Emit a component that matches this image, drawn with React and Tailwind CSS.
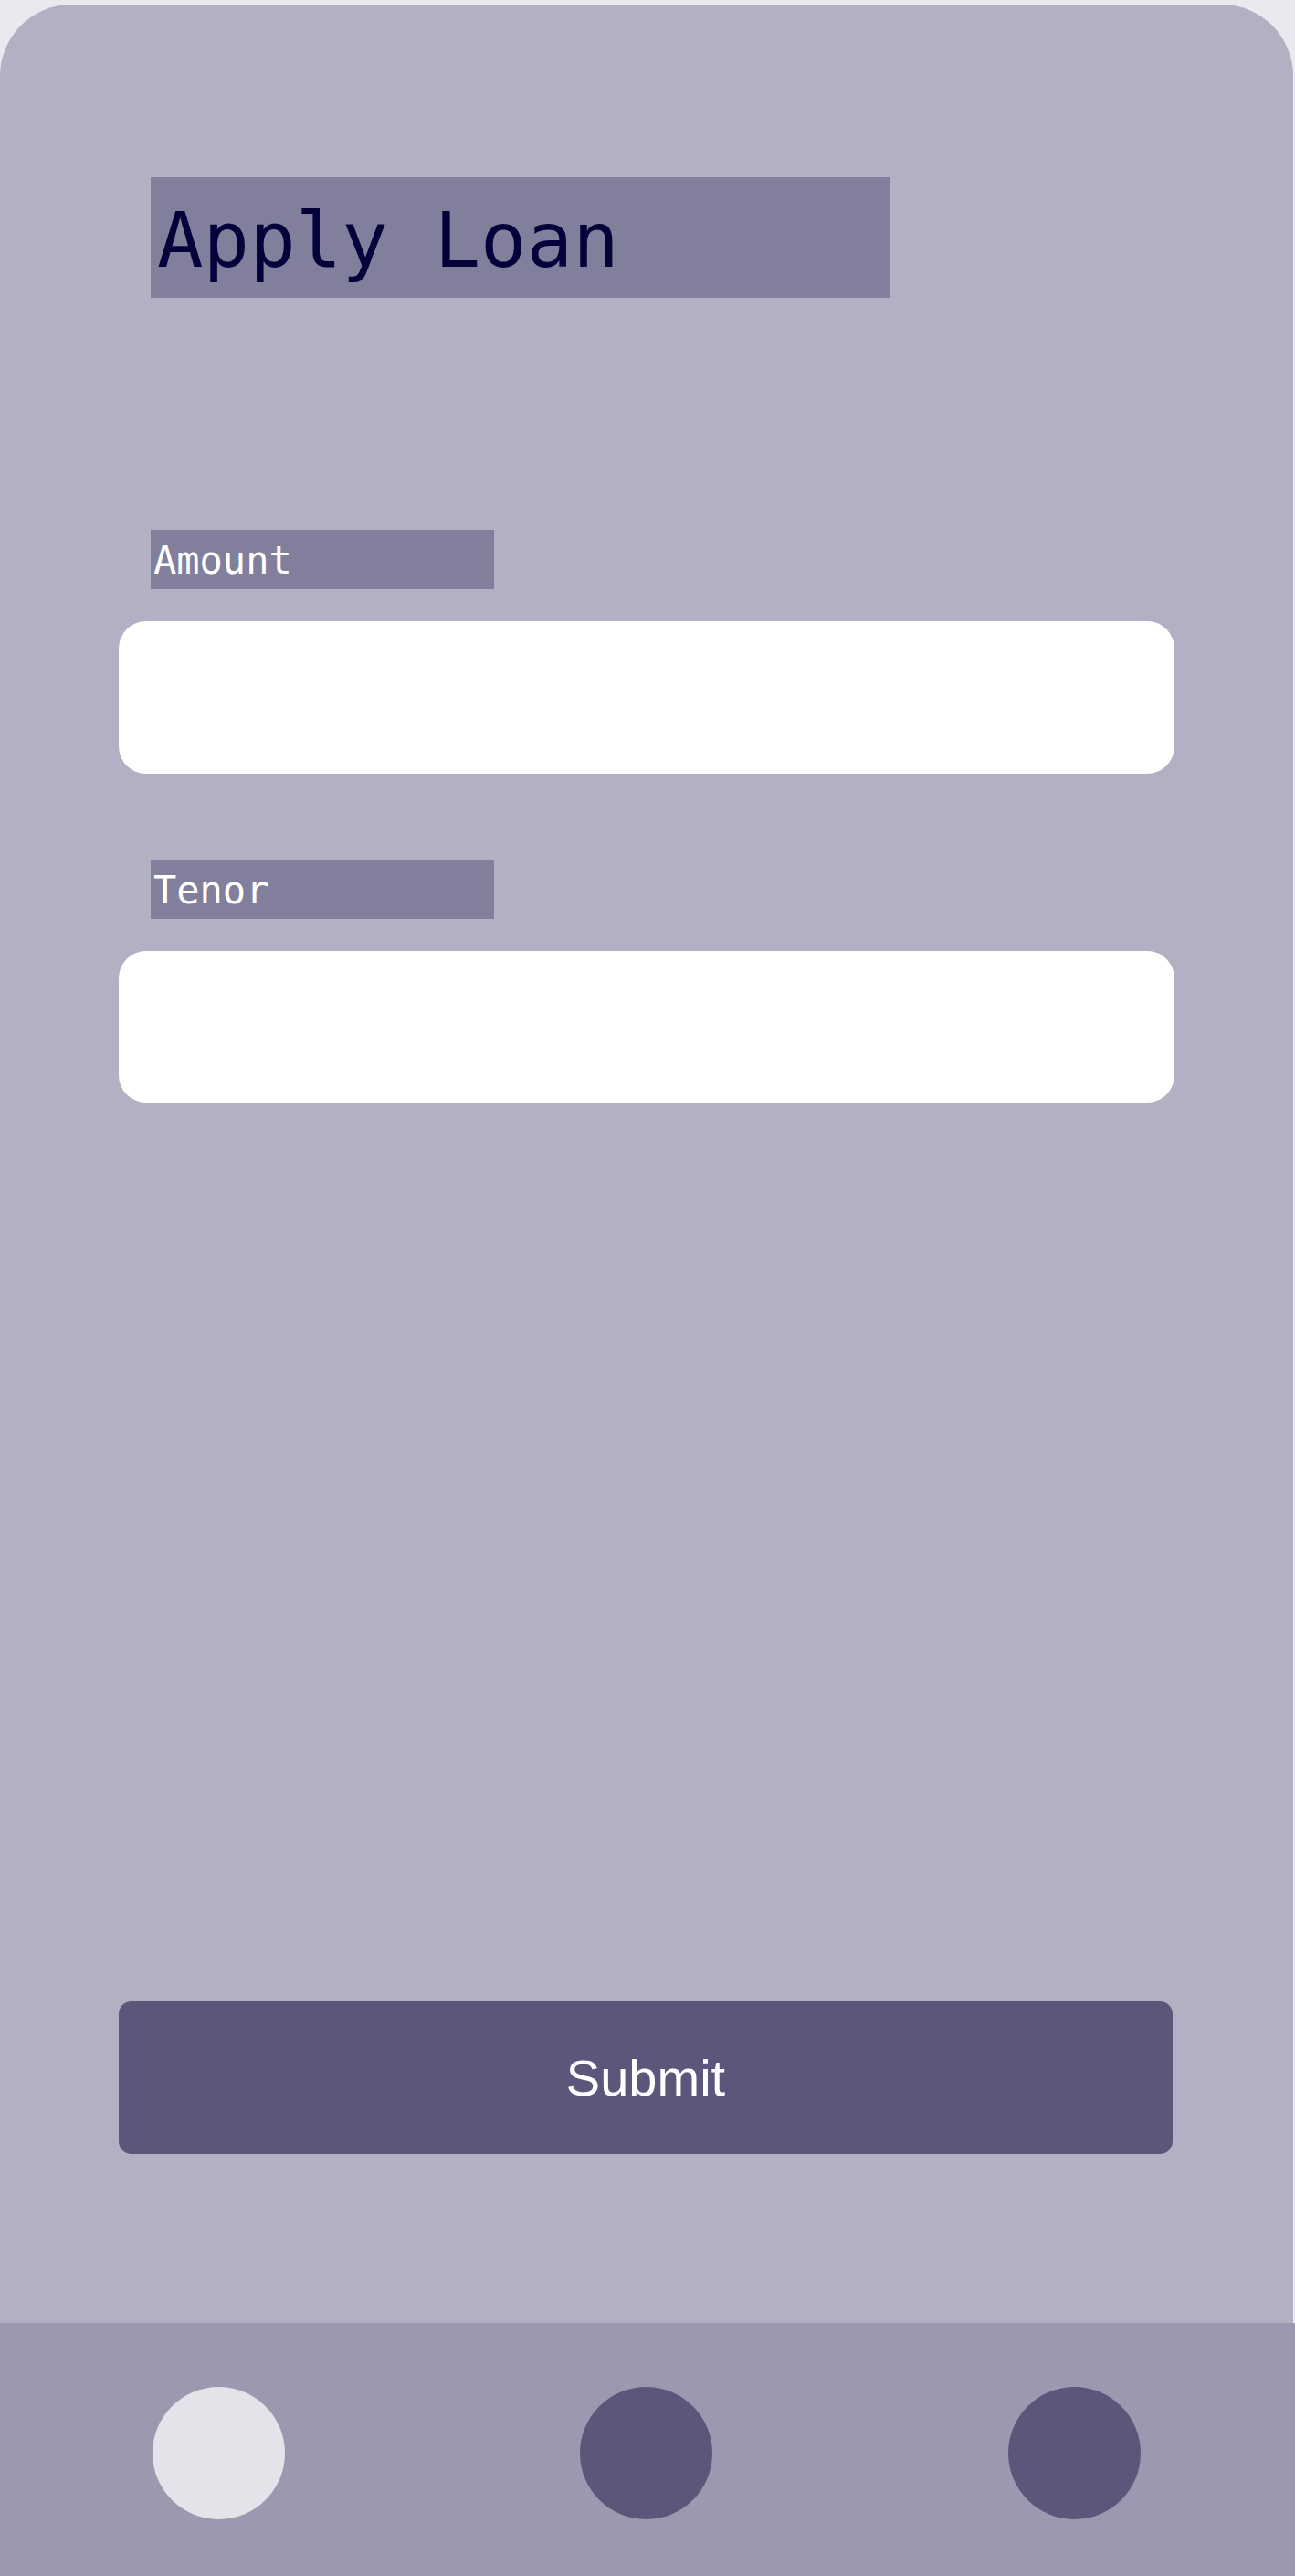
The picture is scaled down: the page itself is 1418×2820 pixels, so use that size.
export default function App() {
  return (
    <div className="min-h-[2820px] bg-[#e9e9ef] pt-[5px] flex flex-col">
      <div className="mr-[2px] h-[2538px] rounded-t-[78px] bg-[#b2b1c3] flex flex-col">
        <div className="ml-[165px] mt-[189px] w-[810px] h-[132px] bg-[#817f9b] flex items-center pl-[7px] pt-[6px]">
          <h1 className="font-['DejaVu_Sans_Mono',monospace] text-[84px] leading-none text-[#03003a]">
            Apply Loan
          </h1>
        </div>

        <div className="ml-[165px] mt-[254px] w-[376px] h-[65px] bg-[#817f9b] flex items-center pl-[3px] pt-[3px]">
          <span className="font-['DejaVu_Sans_Mono',monospace] text-[42px] leading-none text-white">
            Amount
          </span>
        </div>
        <input
          type="text"
          className="ml-[130px] mt-[35px] w-[1156px] h-[167px] rounded-[30px] bg-white outline-none"
        />

        <div className="ml-[165px] mt-[94px] w-[376px] h-[65px] bg-[#817f9b] flex items-center pl-[3px] pt-[3px]">
          <span className="font-['DejaVu_Sans_Mono',monospace] text-[42px] leading-none text-white">
            Tenor
          </span>
        </div>
        <input
          type="text"
          className="ml-[130px] mt-[35px] w-[1156px] h-[166px] rounded-[30px] bg-white outline-none"
        />

        <button className="ml-[130px] mt-[984px] w-[1154px] h-[167px] rounded-[14px] bg-[#5b577a] text-white font-['Liberation_Sans',Arial,sans-serif] text-[56px] flex items-center justify-center">
          Submit
        </button>
      </div>

      <nav className="h-[277px] bg-[#9b99b0] flex items-center justify-around pl-[5px] pr-[7px] pt-[8px]">
        <div className="w-[145px] h-[145px] rounded-full bg-[#e4e3ea]" />
        <div className="w-[145px] h-[145px] rounded-full bg-[#5b577a]" />
        <div className="w-[145px] h-[145px] rounded-full bg-[#5b577a]" />
      </nav>
    </div>
  )
}
